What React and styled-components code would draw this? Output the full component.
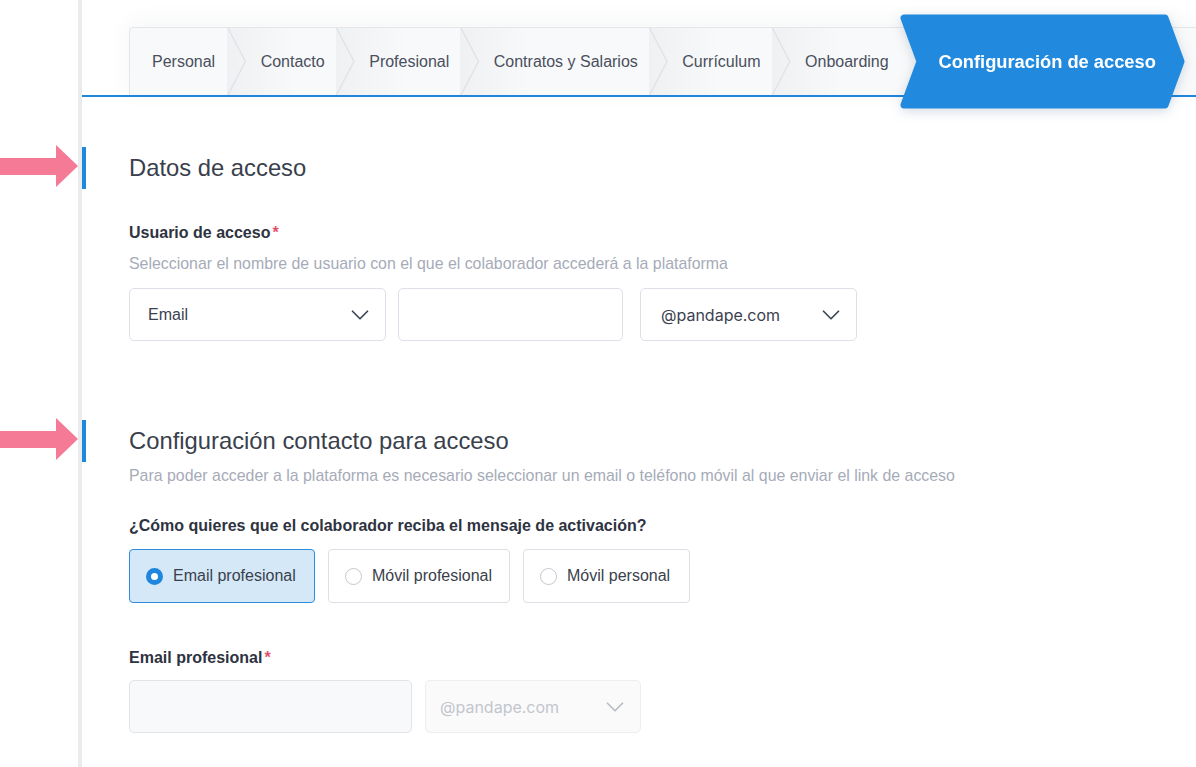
import React, {useState} from "react"
import styled, {createGlobalStyle} from "styled-components"
import {ChevronDown} from "lucide-react"

const GlobalStyle = createGlobalStyle`
  *{ box-sizing: border-box; }
  body{
    margin: 0;
    background: #ffffff;
    font-family: "Liberation Sans", Arial, sans-serif;
    color: #3c4150;
  }
`

const steps = ["Personal", "Contacto", "Profesional", "Contratos y Salarios", "Currículum", "Onboarding"]

const Arrow = ()=>(
  <ArrowMark width="78" height="42" viewBox="0 0 78 42">
    <path d="M0 13 H56 V0 L78 21 L56 42 V30 H0 Z" fill="#f57a96"/>
  </ArrowMark>
)

const Select = ({value, pad, width, mono, disabled})=>(
  <SelectBox $pad={pad} $w={width} $disabled={disabled}>
    <SelectText $inter={mono} $disabled={disabled}>{value}</SelectText>
    <ChevronDown size={30} strokeWidth={1.35} color={disabled ? "#b8bcc4" : "#3c4656"}/>
  </SelectBox>
)

const App = ()=>{
  const [channel, setChannel] = useState("email")
  const options = [
    {id: "email", label: "Email profesional", w: 186},
    {id: "movil", label: "Móvil profesional", w: 182},
    {id: "personal", label: "Móvil personal", w: 167},
  ]
  return(
    <>
      <GlobalStyle/>
      <Page>
        <Gutter/>
        <Rail/>
        <Main>
          <Stepper>
            <Tabs>
              {steps.map((s, i)=>(
                <Tab key={s} $first={i === 0}>{s}</Tab>
              ))}
              <ActiveTab>
                <ActiveShape viewBox="0 0 285 96" preserveAspectRatio="none">
                  <path d="M4 4 H265 L281 48 L265 92 H4 L20 48 Z" fill="#218ade" stroke="#218ade" strokeWidth="7" strokeLinejoin="round"/>
                </ActiveShape>
                <ActiveLabel>Configuración de acceso</ActiveLabel>
              </ActiveTab>
              <TabFill/>
            </Tabs>
          </Stepper>

          <Section $top={50}>
            <Heading>
              <Arrow/>
              Datos de acceso
            </Heading>
            <Label $top={34}>Usuario de acceso<Req>*</Req></Label>
            <Help $top={11}>Seleccionar el nombre de usuario con el que el colaborador accederá a la plataforma</Help>
            <FieldRow $top={14} $gap={12}>
              <Select value="Email" pad={18} width={257}/>
              <Input $w={225} $mr={5}/>
              <Select value="@pandape.com" pad={20} width={217} mono/>
            </FieldRow>
          </Section>

          <Section $top={79}>
            <Heading>
              <Arrow/>
              Configuración contacto para acceso
            </Heading>
            <Help $top={4}>Para poder acceder a la plataforma es necesario seleccionar un email o teléfono móvil al que enviar el link de acceso</Help>
            <Label $top={30}>¿Cómo quieres que el colaborador reciba el mensaje de activación?</Label>
            <RadioRow>
              {options.map((o)=>(
                <RadioCard key={o.id} $w={o.w} $active={channel === o.id} onClick={()=>setChannel(o.id)}>
                  <Dot $active={channel === o.id}/>
                  {o.label}
                </RadioCard>
              ))}
            </RadioRow>
            <Label $top={45}>Email profesional<Req>*</Req></Label>
            <FieldRow $top={12} $gap={13}>
              <Input $w={283} disabled/>
              <Select value="@pandape.com" pad={14} width={216} mono disabled/>
            </FieldRow>
          </Section>
        </Main>
      </Page>
    </>
  )
}
export default App

const Page = styled.div`
  display: flex;
  width: 100%;
  min-height: 767px;
  overflow: hidden;
`
const Gutter = styled.div`
  width: 78px;
  flex-shrink: 0;
`
const Rail = styled.div`
  width: 4px;
  flex-shrink: 0;
  background-color: #e9ebef;
`
const Main = styled.div`
  flex: 1;
  display: flex;
  flex-direction: column;
`
const Stepper = styled.div`
  padding: 27px 0 0 47px;
  border-bottom: 2px solid #2088dc;
`
const Tabs = styled.div`
  display: flex;
  height: 68px;
  background-color: #f8f9fa;
  border-top: 1px solid #e3e6ea;
  border-left: 1px solid #e3e6ea;
  border-top-left-radius: 4px;
  box-shadow: 0 -4px 24px rgba(40, 50, 70, 0.05);
`
const Tab = styled.div`
  position: relative;
  display: flex;
  align-items: center;
  padding: 0 ${p => p.$first ? "12px" : "11px"} 0 ${p => p.$first ? "22px" : "33.5px"};
  font-size: 16px;
  color: #4a4f5d;
  white-space: nowrap;
  background: ${p => p.$first ? "transparent" : "linear-gradient(to right, rgba(40,50,80,0.045), rgba(40,50,80,0) 70px)"};

  &::before{
    content: "";
    display: ${p => p.$first ? "none" : "block"};
    position: absolute;
    left: 0;
    top: 0;
    bottom: 0;
    width: 20px;
    background-color: #dfe2e7;
    clip-path: polygon(0 0, 1.5px 0, 19px 50%, 1.5px 100%, 0 100%, 17.5px 50%);
  }
`
const ActiveTab = styled.div`
  position: relative;
  z-index: 2;
  width: 285px;
  margin: -14px 0;
  display: flex;
  align-items: center;
  justify-content: center;
  padding-left: 10px;
  filter: drop-shadow(0 3px 6px rgba(20, 60, 110, 0.18));
`
const ActiveShape = styled.svg`
  position: absolute;
  inset: 0;
  width: 100%;
  height: 100%;
`
const ActiveLabel = styled.span`
  position: relative;
  color: #ffffff;
  font-weight: 700;
  font-size: 18.3px;
  white-space: nowrap;
`
const TabFill = styled.div`
  flex: 1;
`
const Section = styled.section`
  margin-top: ${p => p.$top}px;
  padding-left: 47px;
  display: flex;
  flex-direction: column;
  align-items: flex-start;
`
const Heading = styled.h2`
  position: relative;
  margin: 0;
  height: 42px;
  line-height: 42px;
  font-size: 23.8px;
  font-weight: 400;
  color: #3a3f4c;

  &::before{
    content: "";
    position: absolute;
    left: -47px;
    top: 0;
    width: 4px;
    height: 42px;
    background-color: #2088dc;
  }
`
const ArrowMark = styled.svg`
  position: absolute;
  left: -129px;
  top: -2px;
`
const Label = styled.div`
  margin-top: ${p => p.$top}px;
  line-height: 20px;
  font-size: 16px;
  font-weight: 700;
  color: #2e3341;
`
const Req = styled.span`
  color: #e4506a;
  margin-left: 2px;
`
const Help = styled.div`
  margin-top: ${p => p.$top}px;
  line-height: 20px;
  font-size: 15.9px;
  color: #a6abb8;
`
const FieldRow = styled.div`
  margin-top: ${p => p.$top}px;
  display: flex;
  gap: ${p => p.$gap}px;
`
const SelectBox = styled.div`
  width: ${p => p.$w}px;
  height: 53px;
  display: flex;
  align-items: center;
  justify-content: space-between;
  padding: 0 10px 0 ${p => p.$pad}px;
  border: 1px solid ${p => p.$disabled ? "#eceef1" : "#dde0e6"};
  border-radius: 5px;
  background-color: ${p => p.$disabled ? "#fafafb" : "#ffffff"};
`
const SelectText = styled.span`
  font-family: ${p => p.$inter ? "Inter, sans-serif" : "'Liberation Sans', Arial, sans-serif"};
  font-size: 16px;
  color: ${p => p.$disabled ? "#c3c6cc" : "#3c4150"};
`
const Input = styled.div`
  width: ${p => p.$w}px;
  height: 53px;
  margin-right: ${p => p.$mr || 0}px;
  border: 1px solid ${p => p.disabled ? "#e2e4e9" : "#dde0e6"};
  border-radius: 5px;
  background-color: ${p => p.disabled ? "#f8f9fa" : "#ffffff"};
`
const RadioRow = styled.div`
  margin-top: 13px;
  display: flex;
  gap: 13px;
`
const RadioCard = styled.div`
  width: ${p => p.$w}px;
  height: 54px;
  display: flex;
  align-items: center;
  gap: 10px;
  padding-left: 16px;
  border: 1px solid ${p => p.$active ? "#2f8ddc" : "#dcdfe5"};
  border-radius: 4px;
  background-color: ${p => p.$active ? "#d4e8f8" : "#ffffff"};
  font-size: 16px;
  color: #3a3f4c;
  cursor: pointer;
`
const Dot = styled.span`
  width: 17px;
  height: 17px;
  border-radius: 50%;
  flex-shrink: 0;
  background-color: #ffffff;
  border: ${p => p.$active ? "5.5px solid #1e86dc" : "1.5px solid #c4c8cf"};
`
